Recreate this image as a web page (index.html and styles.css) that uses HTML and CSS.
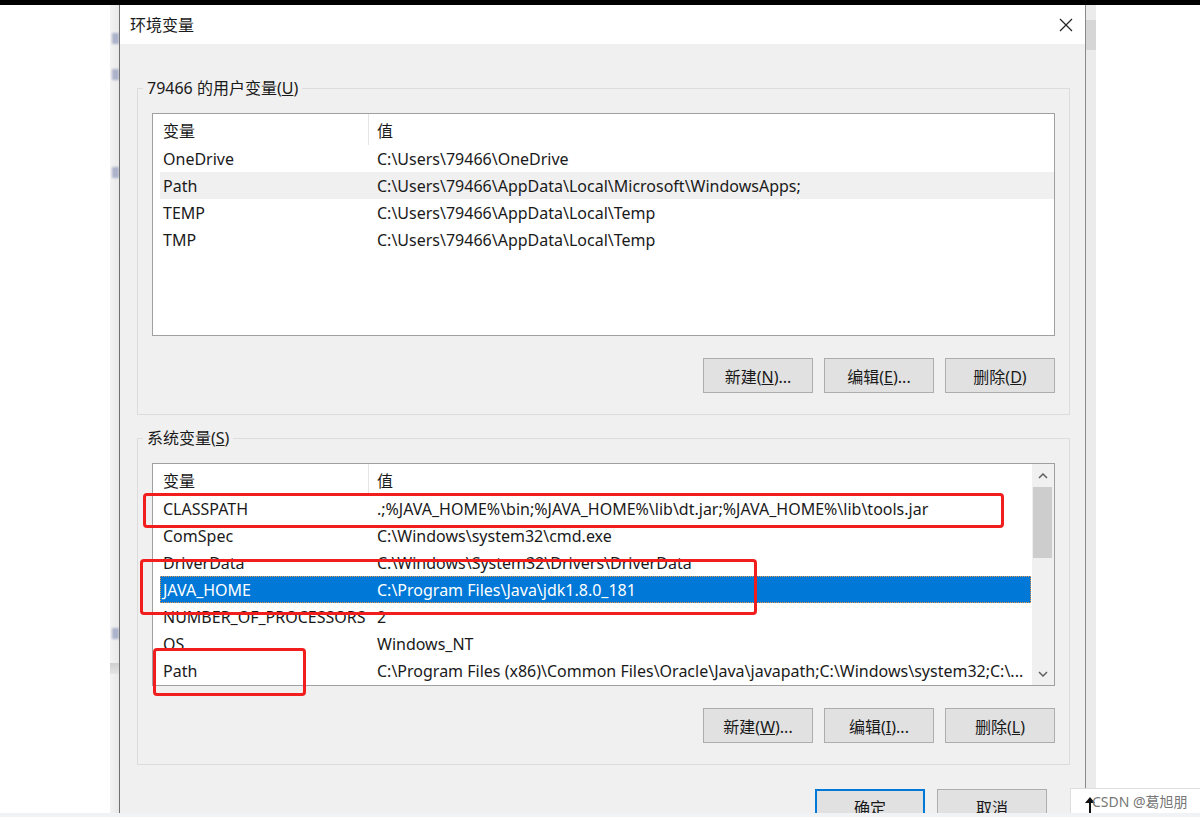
FILE: index.html
```html
<!DOCTYPE html>
<html lang="zh-CN">
<head>
    <meta charset="UTF-8">
    <meta name="viewport" content="width=device-width, initial-scale=1.0">
    <title>环境变量</title>
    <link rel="stylesheet" href="styles.css">
</head>
<body>

    <div class="topbar"></div>

    <div class="screen">
        <div class="blank-left"></div>

        <!-- 后面被挡住的系统属性窗口, 只露出一条边 -->
        <div class="behind">
            <span class="frag frag1"></span>
            <span class="frag frag2"></span>
            <span class="frag frag3"></span>
            <span class="frag frag4"></span>
            <div class="behind-band"></div>
        </div>

        <div class="dialog">
            <div class="titlebar">
                <span class="title">环境变量</span>
                <svg class="close" width="14" height="14" viewBox="0 0 14 14">
                    <path d="M1 1 L13 13 M13 1 L1 13" stroke="#222" stroke-width="1.2" fill="none"/>
                </svg>
            </div>

            <div class="dialog-body">
                <!-- 用户变量 -->
                <fieldset class="group group-user">
                    <legend>79466 的用户变量(<u>U</u>)</legend>
                    <div class="list">
                        <div class="list-rows">
                            <div class="row head">
                                <div class="col-name">变量</div>
                                <div class="col-value">值</div>
                            </div>
                            <div class="row">
                                <div class="col-name">OneDrive</div>
                                <div class="col-value">C:\Users\79466\OneDrive</div>
                            </div>
                            <div class="row inactive-selected">
                                <div class="col-name">Path</div>
                                <div class="col-value">C:\Users\79466\AppData\Local\Microsoft\WindowsApps;</div>
                            </div>
                            <div class="row">
                                <div class="col-name">TEMP</div>
                                <div class="col-value">C:\Users\79466\AppData\Local\Temp</div>
                            </div>
                            <div class="row">
                                <div class="col-name">TMP</div>
                                <div class="col-value">C:\Users\79466\AppData\Local\Temp</div>
                            </div>
                        </div>
                    </div>
                    <div class="buttons">
                        <button class="btn">新建(<u>N</u>)...</button>
                        <button class="btn">编辑(<u>E</u>)...</button>
                        <button class="btn">删除(<u>D</u>)</button>
                    </div>
                </fieldset>

                <!-- 系统变量 -->
                <fieldset class="group group-system">
                    <legend>系统变量(<u>S</u>)</legend>
                    <div class="list">
                        <div class="list-rows">
                            <div class="row head">
                                <div class="col-name">变量</div>
                                <div class="col-value">值</div>
                            </div>
                            <div class="row">
                                <div class="col-name">CLASSPATH</div>
                                <div class="col-value">.;%JAVA_HOME%\bin;%JAVA_HOME%\lib\dt.jar;%JAVA_HOME%\lib\tools.jar</div>
                            </div>
                            <div class="row">
                                <div class="col-name">ComSpec</div>
                                <div class="col-value">C:\Windows\system32\cmd.exe</div>
                            </div>
                            <div class="row">
                                <div class="col-name">DriverData</div>
                                <div class="col-value">C:\Windows\System32\Drivers\DriverData</div>
                            </div>
                            <div class="row selected">
                                <div class="col-name">JAVA_HOME</div>
                                <div class="col-value">C:\Program Files\Java\jdk1.8.0_181</div>
                            </div>
                            <div class="row">
                                <div class="col-name">NUMBER_OF_PROCESSORS</div>
                                <div class="col-value">2</div>
                            </div>
                            <div class="row">
                                <div class="col-name">OS</div>
                                <div class="col-value">Windows_NT</div>
                            </div>
                            <div class="row">
                                <div class="col-name">Path</div>
                                <div class="col-value">C:\Program Files (x86)\Common Files\Oracle\Java\javapath;C:\Windows\system32;C:\...</div>
                            </div>
                        </div>
                        <div class="scrollbar">
                            <div class="scroll-arrow">
                                <svg width="10" height="6" viewBox="0 0 10 6"><path d="M1 5 L5 1 L9 5" stroke="#606060" stroke-width="1.5" fill="none"/></svg>
                            </div>
                            <div class="scroll-thumb"></div>
                            <div class="scroll-track"></div>
                            <div class="scroll-arrow">
                                <svg width="10" height="6" viewBox="0 0 10 6"><path d="M1 1 L5 5 L9 1" stroke="#606060" stroke-width="1.5" fill="none"/></svg>
                            </div>
                        </div>
                    </div>
                    <div class="buttons">
                        <button class="btn">新建(<u>W</u>)...</button>
                        <button class="btn">编辑(<u>I</u>)...</button>
                        <button class="btn">删除(<u>L</u>)</button>
                    </div>
                </fieldset>

                <div class="dialog-buttons">
                    <button class="btn btn-default">确定</button>
                    <button class="btn">取消</button>
                </div>
            </div>
        </div>

        <div class="shadow">
            <div class="shadow-top"></div>
        </div>
    </div>

    <div class="bottom-strip"></div>

    <!-- 截图上画的红框 -->
    <div class="mark mark-classpath"></div>
    <div class="mark mark-java"></div>
    <div class="mark mark-path"></div>

    <div class="watermark">
        <svg class="cursor" width="12" height="18" viewBox="0 0 12 18">
            <path d="M6 1 L1 7 L5 7 L5 17 L7 17 L7 7 L11 7 Z" fill="#111"/>
        </svg>
        <span>CSDN @葛旭朋</span>
    </div>

</body>
</html>
```

FILE: styles.css
```css
* {
    box-sizing: border-box;
}
body {
    margin: 0;
    width: 1200px;
    height: 817px;
    overflow: hidden;
    position: relative;
    background-color: #fff;
    font-family: "Noto Sans", "Noto Sans CJK SC", sans-serif;
    font-size: 16px;
    color: #1a1a1a;
}
.topbar {
    height: 5px;
    background-color: #000;
}
.screen {
    display: flex;
    height: 808px;
}
.blank-left {
    width: 110px;
}
.behind {
    width: 9px;
    background: linear-gradient(to right, #f3f3f3, #e9e9e9);
    overflow: hidden;
    display: flex;
    flex-direction: column;
}
/* 被遮住的文字只剩几笔, 用模糊的小块代替 */
.frag {
    display: block;
    width: 7px;
    height: 11px;
    margin-left: 2px;
    background-color: #7683ad;
    opacity: 0.55;
    filter: blur(1px);
}
.frag1 { margin-top: 28px; }
.frag2 { margin-top: 25px; }
.frag3 { margin-top: 87px; }
.frag4 { margin-top: 450px; }
.behind-band {
    height: 11px;
    margin-top: 24px;
    background: linear-gradient(to bottom, #cfcfcf, #e4e4e4);
}
.dialog {
    width: 967px;
    border-left: 1px solid #6e6e6e;
    border-right: 1px solid #8a8a8a;
    background-color: #f0f0f0;
    overflow: hidden;
}
.titlebar {
    height: 39px;
    background-color: #fff;
    display: flex;
    align-items: center;
    justify-content: space-between;
    padding: 0 12px 0 10px;
}
.title {
    margin-top: -2px;
}
.dialog-body {
    padding: 0 15px 0 17px;
}
.group {
    margin: 0;
    padding: 15px 14px 21px 14px;
    border: 1px solid #dcdcdc;
    min-width: 0;
}
.group-user {
    margin-top: 34px;
}
.group-system {
    margin-top: 13px;
}
.group legend {
    margin-left: -9px;
    padding: 0 4px;
    line-height: 20px;
}
.list {
    height: 223px;
    display: flex;
    background-color: #fff;
    border: 1px solid #a0a0a0;
}
.list-rows {
    flex: 1;
    min-width: 0;
    padding-left: 7px;
}
.row {
    display: flex;
    align-items: center;
    height: 27px;
    white-space: nowrap;
}
.row.head {
    height: 31px;
    align-items: stretch;
}
.row.head > div {
    display: flex;
    align-items: center;
}
.col-name {
    width: 209px;
    flex-shrink: 0;
    padding-left: 3px;
    overflow: hidden;
}
.col-value {
    flex: 1;
    min-width: 0;
    padding-left: 8px;
    overflow: hidden;
}
.row.head .col-name {
    border-right: 1px solid #e5e5e5;
}
.row.inactive-selected {
    background-color: #f0f0f0;
}
.row.selected {
    background-color: #0078d7;
    color: #fff;
    outline: 1px dotted #e89a4c;
    outline-offset: -1px;
}
.scrollbar {
    width: 22px;
    margin-left: 1px;
    display: flex;
    flex-direction: column;
    background-color: #f0f0f0;
}
.scroll-arrow {
    height: 23px;
    display: flex;
    align-items: center;
    justify-content: center;
}
.scroll-thumb {
    height: 71px;
    margin: 0 2px 0 1px;
    background-color: #cdcdcd;
}
.scroll-track {
    flex: 1;
}
.buttons, .dialog-buttons {
    display: flex;
    justify-content: flex-end;
    gap: 11px;
}
.buttons {
    margin-top: 22px;
}
.dialog-buttons {
    margin-top: 24px;
    padding-right: 23px;
    gap: 12px;
}
.btn {
    width: 110px;
    height: 35px;
    padding: 0;
    font: inherit;
    color: #1a1a1a;
    background-color: #e1e1e1;
    border: 1px solid #adadad;
}
.btn-default {
    border: 2px solid #0078d7;
}
.shadow {
    width: 10px;
    background-color: #ebebeb;
}
.shadow-top {
    height: 30px;
    margin-top: 15px;
    background-color: #d6d6d6;
}
.bottom-strip {
    height: 4px;
    background-color: #f1f2f5;
}
.mark {
    position: absolute;
    border: 3px solid #f21d1d;
    border-radius: 4px;
}
.mark-classpath {
    left: 143px;
    top: 493px;
    width: 861px;
    height: 35px;
}
.mark-java {
    left: 140px;
    top: 559px;
    width: 617px;
    height: 56px;
}
.mark-path {
    left: 153px;
    top: 648px;
    width: 153px;
    height: 48px;
}
.watermark {
    position: absolute;
    left: 1070px;
    top: 788px;
    width: 130px;
    height: 25px;
    background-color: #fff;
    border-top: 1px solid #dedede;
    border-left: 1px solid #dedede;
    display: flex;
    align-items: center;
    padding-left: 13px;
    color: #777;
    font-size: 14px;
}
.cursor {
    margin-right: -4px;
    margin-top: 8px;
}
```
